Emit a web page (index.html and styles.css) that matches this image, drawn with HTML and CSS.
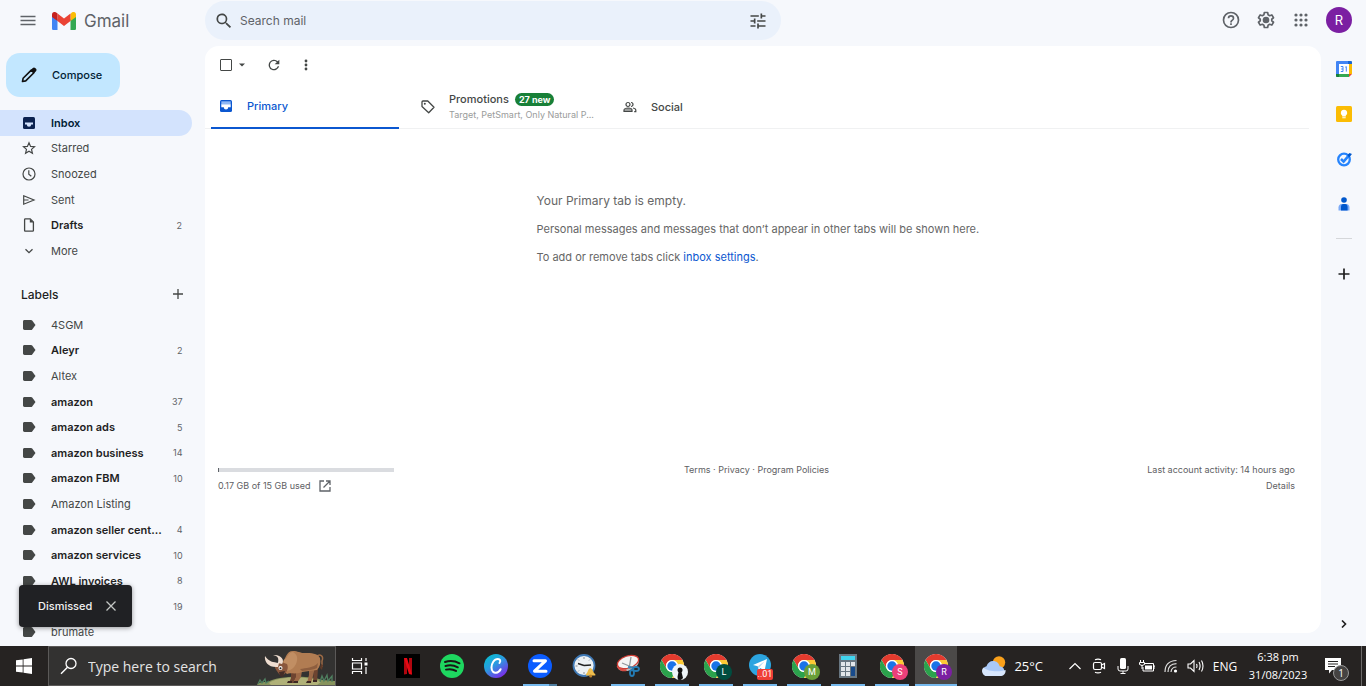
FILE: index.html
```
<!DOCTYPE html>
<html lang="en">
<head>
    <meta charset="UTF-8">
    <meta name="viewport" content="width=device-width, initial-scale=1.0">
    <title>Gmail</title>
    <link rel="stylesheet" href="styles.css">
</head>
<body>
    <!-- Shared icons -->
    <svg class="sprite" aria-hidden="true">
        <symbol id="i-tag" viewBox="0 0 14 14"><path d="M2.500 2h6.500c.5 0 .9.200 1.200.6L13.500 7l-3.300 4.400c-.3.400-.7.600-1.200.6H2.500C1.700 12 1 11.400 1 10.600V3.400C1 2.600 1.700 2 2.500 2z" fill="#444746"/></symbol>
        <symbol id="i-chrome" viewBox="0 0 24 24">
            <circle cx="12" cy="12" r="12" fill="#fff"/>
            <path d="M1.600 6A12 12 0 0 1 22.400 6H12a6 6 0 0 0-5.200 9z" fill="#e33b2e"/>
            <path d="M1.600 6A12 12 0 0 0 12 24l5.200-9A6 6 0 0 1 6.800 15z" fill="#2ba24c"/>
            <path d="M22.400 6A12 12 0 0 1 12 24l5.200-9A6 6 0 0 0 12 6z" fill="#fcc934"/>
            <circle cx="12" cy="12" r="6" fill="#fff"/>
            <circle cx="12" cy="12" r="4.700" fill="#1a73e8"/>
        </symbol>
    </svg>

    <header class="header">
        <div class="brand">
            <button class="icon-button" aria-label="Main menu">
                <svg width="18" height="18" viewBox="0 0 18 18"><path d="M1.500 4.500h15M1.500 8.500h15M1.500 12.500h15" stroke="#5f6368" stroke-width="1.500"/></svg>
            </button>
            <a href="#" class="logo">
                <svg width="24" height="18" viewBox="0 0 24 18">
                    <path d="M0 3v13.400C0 17.300.7 18 1.600 18h3.900V7z" fill="#4285f4"/>
                    <path d="M24 3v13.400c0 .9-.7 1.600-1.600 1.600h-3.900V7z" fill="#34a853"/>
                    <path d="M18.500 2v7L24 4.900V2.500c0-2.200-2.600-3.300-4.200-2z" fill="#fbbc04"/>
                    <path d="M5.500 9V1.500L12 6.400l6.500-4.900V9L12 13.900z" fill="#ea4335"/>
                    <path d="M0 2.500v2.400L5.500 9V1.600L4.200.5C2.500-.8 0 .4 0 2.500z" fill="#c5221f"/>
                </svg>
                <span>Gmail</span>
            </a>
        </div>
        <form class="search">
            <button type="button" class="icon-button" aria-label="Search">
                <svg width="20" height="20" viewBox="0 0 24 24"><path d="M15.500 14h-.8l-.3-.3A6.500 6.500 0 1 0 13.700 14.400l.3.300v.8l5 5 1.500-1.500zm-6 0a4.500 4.500 0 1 1 0-9 4.500 4.500 0 0 1 0 9z" fill="#444746"/></svg>
            </button>
            <input type="text" placeholder="Search mail" aria-label="Search mail">
            <button type="button" class="icon-button" aria-label="Show search options">
                <svg width="20" height="20" viewBox="0 0 24 24"><path d="M3 17v2h6v-2H3zM3 5v2h10V5H3zm10 16v-2h8v-2h-8v-2h-2v6h2zM7 9v2H3v2h4v2h2V9H7zm14 4v-2H11v2h10zm-6-4h2V7h4V5h-4V3h-2v6z" fill="#444746"/></svg>
            </button>
        </form>
        <div class="header-actions">
            <button class="icon-button" aria-label="Support">
                <svg width="20" height="20" viewBox="0 0 24 24"><path d="M11 18h2v-2h-2v2zm1-16a10 10 0 1 0 0 20 10 10 0 0 0 0-20zm0 18a8 8 0 1 1 0-16 8 8 0 0 1 0 16zm0-14a4 4 0 0 0-4 4h2a2 2 0 1 1 4 0c0 2-3 1.800-3 5h2c0-2.300 3-2.500 3-5a4 4 0 0 0-4-4z" fill="#5f6368"/></svg>
            </button>
            <button class="icon-button" aria-label="Settings">
                <svg width="20" height="20" viewBox="0 0 24 24"><path d="M10 3h4l.5 2.700 1.900 1.100 2.600-.9 2 3.400-2.100 1.800v1.800l2.100 1.800-2 3.400-2.600-.9-1.900 1.100L14 21h-4l-.5-2.700-1.900-1.100-2.600.9-2-3.400 2.100-1.800v-1.800L3 9.300l2-3.400 2.600.9 1.900-1.100z" fill="none" stroke="#5f6368" stroke-width="2" stroke-linejoin="round"/><circle cx="12" cy="12" r="4" fill="#5f6368"/></svg>
            </button>
            <button class="icon-button" aria-label="Google apps">
                <svg width="14" height="14" viewBox="0 0 14 14" fill="#5f6368"><circle cx="2" cy="2" r="1.600"/><circle cx="7" cy="2" r="1.600"/><circle cx="12" cy="2" r="1.600"/><circle cx="2" cy="7" r="1.600"/><circle cx="7" cy="7" r="1.600"/><circle cx="12" cy="7" r="1.600"/><circle cx="2" cy="12" r="1.600"/><circle cx="7" cy="12" r="1.600"/><circle cx="12" cy="12" r="1.600"/></svg>
            </button>
            <button class="avatar">R</button>
        </div>
    </header>

    <div class="content">
        <aside class="sidebar">
            <button class="compose">
                <svg width="18" height="18" viewBox="0 0 18 18"><path d="M2.500 15.500l.6-3.200 8.200-8.200 2.600 2.600-8.200 8.200z" fill="none" stroke="#111" stroke-width="1.600" stroke-linejoin="round"/><path d="M10.500 4.300l2.300-2.300c.8-.8 1.700-.7 2.400 0l.8.800c.7.700.7 1.600 0 2.400l-2.300 2.300z" fill="#111"/></svg>
                Compose
            </button>
            <nav class="folders">
                <a href="#" class="item active">
                    <svg width="14" height="14" viewBox="0 0 14 14"><rect x="1" y="1" width="12" height="12" rx="1.500" fill="#0b2250"/><path d="M3 6.500h8v2H9.200a2.200 2.200 0 0 1-4.400 0H3z" fill="#d3e3fd"/></svg>
                    <span class="name">Inbox</span>
                </a>
                <a href="#" class="item">
                    <svg width="14" height="14" viewBox="0 0 24 24"><path d="M12 3l2.700 6.300 6.800.6-5.200 4.500 1.600 6.700-5.900-3.600-5.900 3.600 1.600-6.700-5.200-4.500 6.800-.6z" fill="none" stroke="#444746" stroke-width="2"/></svg>
                    <span class="name">Starred</span>
                </a>
                <a href="#" class="item">
                    <svg width="14" height="14" viewBox="0 0 14 14"><circle cx="7" cy="7" r="6" fill="none" stroke="#444746" stroke-width="1.200"/><path d="M6.800 3.300V7.300l2.500 2" fill="none" stroke="#444746" stroke-width="1.200"/></svg>
                    <span class="name">Snoozed</span>
                </a>
                <a href="#" class="item">
                    <svg width="14" height="14" viewBox="0 0 14 14"><path d="M1.700 2.800L12 7 1.700 11.200zM2 7h4.500" fill="none" stroke="#444746" stroke-width="1.200"/></svg>
                    <span class="name">Sent</span>
                </a>
                <a href="#" class="item unread">
                    <svg width="14" height="14" viewBox="0 0 14 14"><path d="M2.600 1.600c0-.5.300-.8.800-.8h4.800l3.200 3.200v8.400c0 .5-.3.800-.8.800H3.400c-.5 0-.8-.3-.8-.8z" fill="none" stroke="#444746" stroke-width="1.300"/><path d="M7.800.8v3.600h3.600z" fill="#444746"/></svg>
                    <span class="name">Drafts</span>
                    <span class="count">2</span>
                </a>
                <a href="#" class="item">
                    <svg width="14" height="14" viewBox="0 0 14 14"><path d="M3.500 5.200L7 8.700l3.500-3.500" fill="none" stroke="#444746" stroke-width="1.300"/></svg>
                    <span class="name">More</span>
                </a>
            </nav>
            <div class="labels-heading">
                <h2>Labels</h2>
                <button class="icon-button" aria-label="Create new label">
                    <svg width="12" height="12" viewBox="0 0 12 12"><path d="M6 1v10M1 6h10" stroke="#444746" stroke-width="1.300"/></svg>
                </button>
            </div>
            <nav class="labels">
                <a href="#" class="item"><svg width="14" height="14"><use href="#i-tag"/></svg><span class="name">4SGM</span></a>
                <a href="#" class="item unread"><svg width="14" height="14"><use href="#i-tag"/></svg><span class="name">Aleyr</span><span class="count">2</span></a>
                <a href="#" class="item"><svg width="14" height="14"><use href="#i-tag"/></svg><span class="name">Altex</span></a>
                <a href="#" class="item unread"><svg width="14" height="14"><use href="#i-tag"/></svg><span class="name">amazon</span><span class="count">37</span></a>
                <a href="#" class="item unread"><svg width="14" height="14"><use href="#i-tag"/></svg><span class="name">amazon ads</span><span class="count">5</span></a>
                <a href="#" class="item unread"><svg width="14" height="14"><use href="#i-tag"/></svg><span class="name">amazon business</span><span class="count">14</span></a>
                <a href="#" class="item unread"><svg width="14" height="14"><use href="#i-tag"/></svg><span class="name">amazon FBM</span><span class="count">10</span></a>
                <a href="#" class="item"><svg width="14" height="14"><use href="#i-tag"/></svg><span class="name">Amazon Listing</span></a>
                <a href="#" class="item unread"><svg width="14" height="14"><use href="#i-tag"/></svg><span class="name">amazon seller cent...</span><span class="count">4</span></a>
                <a href="#" class="item unread"><svg width="14" height="14"><use href="#i-tag"/></svg><span class="name">amazon services</span><span class="count">10</span></a>
                <a href="#" class="item unread"><svg width="14" height="14"><use href="#i-tag"/></svg><span class="name">AWL invoices</span><span class="count">8</span></a>
                <a href="#" class="item unread"><svg width="14" height="14"><use href="#i-tag"/></svg><span class="name"></span><span class="count">19</span></a>
                <a href="#" class="item"><svg width="14" height="14"><use href="#i-tag"/></svg><span class="name">brumate</span></a>
            </nav>
            <div class="toast">
                <span>Dismissed</span>
                <button class="icon-button" aria-label="Close">
                    <svg width="10" height="10" viewBox="0 0 10 10"><path d="M.5.5l9 9M9.500.5l-9 9" stroke="#c4c7c5" stroke-width="1.300"/></svg>
                </button>
            </div>
        </aside>

        <main class="mailbox">
            <div class="toolbar">
                <input type="checkbox" aria-label="Select">
                <button class="icon-button caret" aria-label="Select options">
                    <svg width="6" height="4" viewBox="0 0 6 4"><path d="M0 .5h6L3 3.500z" fill="#444746"/></svg>
                </button>
                <button class="icon-button" aria-label="Refresh">
                    <svg width="16" height="16" viewBox="0 0 24 24"><path d="M17.650 6.350A8 8 0 1 0 19.730 14h-2.080A6 6 0 1 1 12 6c1.660 0 3.140.69 4.220 1.780L13 11h7V4z" fill="#444746"/></svg>
                </button>
                <button class="icon-button" aria-label="More">
                    <svg width="4" height="12" viewBox="0 0 4 12" fill="#444746"><circle cx="2" cy="2" r="1.400"/><circle cx="2" cy="6" r="1.400"/><circle cx="2" cy="10" r="1.400"/></svg>
                </button>
            </div>
            <div class="tabs">
                <a href="#" class="tab selected">
                    <svg width="14" height="14" viewBox="0 0 14 14"><rect x="1" y="1" width="12" height="12" rx="1.500" fill="#0b57d0"/><path d="M2.300 2.300h9.400V6H2.300z" fill="#8fb8f5"/><path d="M2.300 5.500h9.400v2.700H9.200a2.200 2.200 0 0 1-4.400 0H2.300z" fill="#fff"/></svg>
                    <span>Primary</span>
                </a>
                <a href="#" class="tab">
                    <svg width="14" height="14" viewBox="0 0 14 14"><path d="M1 2c0-.6.4-1 1-1h4.800l6.200 6.200L7.700 12.800 1 6.600z" fill="none" stroke="#444746" stroke-width="1.300" stroke-linejoin="round"/><circle cx="3.800" cy="3.800" r="1" fill="#444746"/></svg>
                    <div class="tab-text">
                        <div class="tab-title">Promotions <span class="badge">27 new</span></div>
                        <div class="senders">Target, PetSmart, Only Natural P...</div>
                    </div>
                </a>
                <a href="#" class="tab">
                    <svg width="14" height="14" viewBox="0 0 14 14"><circle cx="5" cy="4.500" r="2" fill="none" stroke="#444746" stroke-width="1.200"/><path d="M1 11.500V10c0-1.300 2.500-2 4-2s4 .7 4 2v1.500z" fill="#9b9d9c" stroke="#444746" stroke-width="1.200"/><path d="M8 2.500a2 2 0 1 1 0 4M10 8c1.600.3 2.800 1 2.800 2.200v1.500h-1.600" fill="none" stroke="#444746" stroke-width="1.200"/></svg>
                    <span>Social</span>
                </a>
            </div>
            <div class="empty">
                <p class="empty-title">Your Primary tab is empty.</p>
                <p>Personal messages and messages that don’t appear in other tabs will be shown here.</p>
                <p>To add or remove tabs click <a href="#">inbox settings</a>.</p>
            </div>
            <footer class="footer">
                <div class="storage">
                    <div class="bar"><div class="bar-fill" style="width: 0.6%"></div></div>
                    <div class="usage">0.17 GB of 15 GB used
                        <a href="#" aria-label="Manage storage"><svg width="12" height="12" viewBox="0 0 12 12"><path d="M5 1H1v10h10V7M7 1h4v4M11 1L4.500 7.500" fill="none" stroke="#5f6368" stroke-width="1.300"/></svg></a>
                    </div>
                </div>
                <div class="policies"><a href="#">Terms</a> · <a href="#">Privacy</a> · <a href="#">Program Policies</a></div>
                <div class="activity">Last account activity: 14 hours ago<br><a href="#">Details</a></div>
            </footer>
        </main>

        <aside class="rail">
            <button class="icon-button" aria-label="Calendar">
                <svg width="16" height="16" viewBox="0 0 16 16"><path d="M1 0h14v3H3v13H1a1 1 0 0 1-1-1V1a1 1 0 0 1 1-1z" fill="#4285f4"/><path d="M12 0h3a1 1 0 0 1 1 1v2h-4z" fill="#1967d2"/><path d="M13 3h3v10h-3z" fill="#fbbc04"/><path d="M3 13h10v3H3z" fill="#34a853"/><path d="M0 13h3v3H1a1 1 0 0 1-1-1z" fill="#188038"/><path d="M13 13h3l-3 3z" fill="#ea4335"/><path d="M3 3h10v10H3z" fill="#fff"/><path d="M4.800 5.500h2.200v5H4.800M5.200 8h1.800M9.300 6.200l1-.6v5" fill="none" stroke="#4285f4"/></svg>
            </button>
            <button class="icon-button" aria-label="Keep">
                <svg width="16" height="16" viewBox="0 0 16 16"><rect width="16" height="16" rx="1.500" fill="#fbbc04"/><path d="M8 3.700a3.100 3.100 0 0 0-1.800 5.700V10.500h3.600V9.400A3.100 3.100 0 0 0 8 3.700zM6.300 11.300h3.400v1H6.300z" fill="#fff"/></svg>
            </button>
            <button class="icon-button" aria-label="Tasks">
                <svg width="16" height="16" viewBox="0 0 16 16"><circle cx="8" cy="8.500" r="5.800" fill="none" stroke="#2684fc" stroke-width="2.300"/><path d="M5 8l2.600 2.600 6-7" fill="none" stroke="#2684fc" stroke-width="2.600"/><path d="M11.500 4l2-2L16 3l-3 3.500z" fill="#0057cc"/></svg>
            </button>
            <button class="icon-button" aria-label="Contacts">
                <svg width="16" height="16" viewBox="0 0 16 16"><circle cx="8" cy="4" r="2.800" fill="#0057cc"/><path d="M2.500 14.500V11.500c0-2.200 1.500-3.500 3-3.500h5c1.600 0 3 1.300 3 3.500v3z" fill="#7baaf7"/><path d="M5 14.500V11c0-2 1-3 2.200-3h2c1.300 0 2.400 1 2.400 3v3.500z" fill="#0057cc"/></svg>
            </button>
            <hr>
            <button class="icon-button" aria-label="Get add-ons">
                <svg width="12" height="12" viewBox="0 0 12 12"><path d="M6 .5v11M.5 6h11" stroke="#1f1f1f" stroke-width="1.700"/></svg>
            </button>
            <button class="icon-button hide-panel" aria-label="Hide side panel">
                <svg width="6" height="8" viewBox="0 0 6 8"><path d="M1 .5L4.500 4 1 7.500" fill="none" stroke="#1f1f1f" stroke-width="1.600"/></svg>
            </button>
        </aside>
    </div>

    <div class="taskbar">
        <button class="start" aria-label="Start">
            <svg width="16" height="16" viewBox="0 0 16 16"><path d="M0 2.300L6.700 1.400v6.200H0zM7.500 1.300L16 0v7.600H7.500zM0 8.400h6.700v6.200L0 13.700zM7.500 8.400H16V16l-8.500-1.300z" fill="#fff"/></svg>
        </button>
        <div class="task-search">
            <svg width="18" height="18" viewBox="0 0 18 18"><circle cx="11" cy="6.500" r="5" fill="none" stroke="#fff" stroke-width="1.300"/><path d="M7.500 10.200L1 16.800" stroke="#fff" stroke-width="1.400"/></svg>
            <input type="text" placeholder="Type here to search" aria-label="Type here to search">
            <svg class="yak" width="78" height="36" viewBox="0 0 78 36">
                <path d="M0 36c1-3 6-3 11-3 8-6 42-7 54-2l13 1v4z" fill="#87935c"/>
                <path d="M12 34c10-7 42-7 52-1l-4 3H14z" fill="#b0b178"/>
                <path d="M1 35l2-4 2 3 3-4 1 4 3-2M63 33l2-6 2 5 3-6 1 6 4-5v6" fill="none" stroke="#4f8060" stroke-width="1.300"/>
                <path d="M59 8c4-4 8-1 6 4v6" fill="none" stroke="#9c6a45" stroke-width="1.500"/>
                <path d="M64 15l2 1-1 5-2-2z" fill="#5f3b28"/>
                <path d="M34 20l5 3v6l-3 5h-4l2-5zM57 19l4 1-1 13h-4z" fill="#6e4430"/>
                <path d="M39 20l6 2-1 6-4 6h-4l3-6zM52 19l6-1-2 9-2 7h-4l2-8z" fill="#9c6846"/>
                <path d="M30 34h5v-2h-4zM36 34h5v-2h-4zM49 34h5v-2h-4zM56 33h4v-2h-4z" fill="#3c2722"/>
                <path d="M26 12c3-2 3-10 10-10 5 0 7 2 11 2 8 0 13 0 16 5 1 5 0 9-3 12-6 1-10 1-15 2-7 3-12 0-15 2-4-3-5-8-4-13z" fill="#b17c52"/>
                <path d="M27 11c4-2 4-8 9-8 5 3 5 7 3 12-3 6-8 8-12 6z" fill="#c18e63"/>
                <path d="M45 22c6-1 11-1 15-3l1-5c-5 5-12 5-18 6z" fill="#8e5e3f"/>
                <path d="M18 15c4-2 8-2 12 0 2 4 0 9-5 12-3-1-5-5-7-8z" fill="#8a573d"/>
                <path d="M22 23l6-1-2 6-3-1z" fill="#432d28"/>
                <path d="M21 18C12 19 7 13 8 7c4 6 8 6 14 7zM21 14c1-5 0-7-5-8 8-1 12 5 9 9z" fill="#efddd0"/>
                <circle cx="23.500" cy="19" r="2" fill="#fff"/><circle cx="23.500" cy="19.300" r="1" fill="#222"/>
            </svg>
        </div>
        <button class="task-view" aria-label="Task View">
            <svg width="18" height="16" viewBox="0 0 18 16"><path d="M1.500 0v2.500h9V0M1.500 16v-2.500h9V16M1.500 5h9v6h-9zM15 0v3M15 9v7" fill="none" stroke="#fff" stroke-width="1.200"/><path d="M13.500 4.500h3v3h-3z" fill="#fff"/></svg>
        </button>
        <div class="apps">
            <button class="app" aria-label="Netflix"><svg width="24" height="24" viewBox="0 0 24 24"><path d="M0 0h24v24H0z" fill="#000"/><path d="M8 4h3v16l-3 .5zM13 4h3v16.500l-3-.5z" fill="#b1060f"/><path d="M8 4h3l5 16.500-3-.5z" fill="#e50914"/></svg></button>
            <button class="app" aria-label="Spotify"><svg width="24" height="24" viewBox="0 0 24 24"><circle cx="12" cy="12" r="12" fill="#1ed760"/><path d="M5 8c5-1.500 10-1 14.500 1.300M5.500 12c4.500-1.200 8.500-.7 12.300 1.300M6 15.600c3.600-.9 7-.5 10 1.300" fill="none" stroke="#191414" stroke-width="2" stroke-linecap="round"/></svg></button>
            <button class="app" aria-label="Canva"><svg width="24" height="24" viewBox="0 0 24 24"><defs><linearGradient id="canva" x2=".7" y2="1"><stop stop-color="#00c4cc"/><stop offset=".5" stop-color="#2a9be0"/><stop offset="1" stop-color="#7d2ae8"/></linearGradient></defs><circle cx="12" cy="12" r="12" fill="url(#canva)"/><path d="M15.500 9c1.500-2 .6-4-1.600-4C10 5 7.500 9.500 7.500 13.500S10 19 12 18.700c2-.2 3.700-1.700 4.600-3.500" fill="none" stroke="#fff" stroke-width="2" stroke-linecap="round"/></svg></button>
            <button class="app open stacked" aria-label="Zoom"><svg width="24" height="24" viewBox="0 0 24 24"><circle cx="12" cy="12" r="12" fill="#0b5cff"/><path d="M6 6.800h11.500L6.500 17.200H18" fill="none" stroke="#fff" stroke-width="3" stroke-linejoin="round" stroke-linecap="round"/></svg></button>
            <button class="app" aria-label="Alarms"><svg width="24" height="24" viewBox="0 0 24 24"><circle cx="12" cy="11.500" r="10.500" fill="#eef2f5" stroke="#3f78b4" stroke-width="1.800"/><path d="M12 11.500L6 9.500M12 11.500l7-.5" stroke="#222" stroke-width="1.400"/><path d="M12 3v2M12 18v2M3.500 12h2M6 5.500l1 1M6 17.500l1-1M18 5.500l-1 1" stroke="#8b8f94"/><path d="M14 20c2-1 1.600-5 4.300-6 3 .8 2.500 5 5 6v1.500H14z" fill="#eebd4c"/><circle cx="18.700" cy="22" r="1.500" fill="#bd832c"/></svg></button>
            <button class="app open" aria-label="Snipping Tool"><svg width="24" height="24" viewBox="0 0 24 24"><ellipse cx="12" cy="10" rx="11" ry="6.500" transform="rotate(-18 12 10)" fill="#b9bcc0"/><ellipse cx="12" cy="8" rx="11" ry="6" transform="rotate(-18 12 8)" fill="#f4f4f4" stroke="#cf3b33" stroke-width="1.200"/><path d="M1.500 12c1 3 5 5 9 4" fill="none" stroke="#d74b43" stroke-width="2"/><path d="M6 9l12 5M15 3l-2 12" stroke="#92979c" stroke-width="1.300"/><path d="M12 13l6 1" stroke="#3883b8" stroke-width="2"/><ellipse cx="20" cy="15" rx="3" ry="2" fill="none" stroke="#247bb4" stroke-width="1.800"/><ellipse cx="16" cy="19" rx="2" ry="3" fill="none" stroke="#247bb4" stroke-width="1.800"/></svg></button>
            <button class="app open" aria-label="Chrome"><svg width="24" height="24"><use href="#i-chrome"/></svg><span class="profile photo"><svg width="16" height="16" viewBox="0 0 16 16"><circle cx="8" cy="6" r="2.500" fill="#111"/><path d="M6.500 8h3l1.500 6-2 2H6l-.5-3z" fill="#111"/></svg></span></button>
            <button class="app open" aria-label="Chrome, L"><svg width="24" height="24"><use href="#i-chrome"/></svg><span class="profile green">L</span></button>
            <button class="app open" aria-label="Telegram"><svg width="24" height="24" viewBox="0 0 24 24"><circle cx="12" cy="11" r="11" fill="#2ca5e0"/><path d="M5 11L19 5l-2.500 12-4-3-2 2-.7-3.700z" fill="#fff"/><path d="M9.800 12.300L16.500 7.500l-5.200 6-.8 2.500z" fill="#b9dcef"/></svg><span class="unread-badge">..01</span></button>
            <button class="app open" aria-label="Chrome, M"><svg width="24" height="24"><use href="#i-chrome"/></svg><span class="profile olive">M</span></button>
            <button class="app open" aria-label="Calculator"><svg width="18" height="24" viewBox="0 0 18 24"><path d="M0 0h18v24H0z" fill="#687681"/><path d="M2 2h14v4H2z" fill="#40d4ee"/><path d="M2 8h4v4H2zM7 8h4v4H7zM12 8h4v4h-4zM2 13h4v4H2zM7 13h4v4H7zM2 18h4v4H2zM7 18h4v4H7z" fill="#e2e6ea"/><path d="M12 13h4v9h-4z" fill="#174a8b"/></svg></button>
            <button class="app open" aria-label="Chrome, S"><svg width="24" height="24"><use href="#i-chrome"/></svg><span class="profile pink">S</span></button>
            <button class="app open current" aria-label="Chrome, R"><svg width="24" height="24"><use href="#i-chrome"/></svg><span class="profile purple">R</span></button>
        </div>
        <div class="tray">
            <button class="weather">
                <svg width="24" height="20" viewBox="0 0 24 20"><circle cx="17" cy="6.500" r="6.200" fill="#f9a01b"/><path d="M5 20a5 5 0 0 1-.5-9.800C5.500 7 8 5 11 5c3.500 0 6 2.200 6.700 5.300A5 5 0 0 1 19 20z" fill="#a9c8f7"/><path d="M5 20a5 5 0 0 1-3.500-8.500c4 4 15 5 22 2.500A5 5 0 0 1 19 20z" fill="#d7e6fc"/></svg>
                25°C
            </button>
            <button class="tray-icon" aria-label="Show hidden icons"><svg width="12" height="8" viewBox="0 0 12 8"><path d="M.5 7L6 1.500 11.500 7" fill="none" stroke="#fff" stroke-width="1.200"/></svg></button>
            <button class="tray-icon" aria-label="Meet Now"><svg width="14" height="16" viewBox="0 0 14 16"><rect x="1.500" y="4.500" width="8" height="7" rx="1.500" fill="none" stroke="#fff" stroke-width="1.200"/><path d="M9.500 7l3-1.500v5l-3-1.500M3 1.800q3-1.500 6 0M3 14.200q3 1.500 6 0" fill="none" stroke="#fff" stroke-width="1.200"/></svg></button>
            <button class="tray-icon" aria-label="Microphone"><svg width="12" height="16" viewBox="0 0 12 16"><rect x="3" y="0" width="6" height="11" rx="1.500" fill="#fff"/><path d="M1 8v3q0 2 2 2h6q2 0 2-2V8M6 13v2.500M3.500 15.500h5" fill="none" stroke="#fff"/></svg></button>
            <button class="tray-icon" aria-label="Battery"><svg width="16" height="12" viewBox="0 0 16 12"><path d="M5 3.500h9.500v7.500H4V7M14.500 6H16v3" fill="none" stroke="#fff"/><path d="M6 5.500h7v4H6z" fill="#fff"/><path d="M1.500 0v2.500M4.500 0v2.500M.5 2.500h5v2q-2.500 2-5 0zM3 5v4" fill="none" stroke="#fff"/></svg></button>
            <button class="tray-icon" aria-label="Network"><svg width="14" height="14" viewBox="0 0 14 14"><path d="M1 13Q1 2 12.500 1.500M4 13Q4 5 12.500 4.700M7 13Q7.500 8 12.500 8" fill="none" stroke="#ddd" stroke-width="1.200"/><circle cx="11.500" cy="12" r="1.600" fill="#fff"/></svg></button>
            <button class="tray-icon" aria-label="Volume"><svg width="17" height="14" viewBox="0 0 17 14"><path d="M1 5h2.500L7 1.500v11L3.500 9H1zM9.500 5q1 2 0 4M12 3q2.200 4 0 8M14.500 1.500q3 5.500 0 11" fill="none" stroke="#fff" stroke-width="1.100"/></svg></button>
            <button class="language">ENG</button>
            <button class="clock">6:38 pm<br>31/08/2023</button>
            <button class="notifications" aria-label="Notifications">
                <svg width="16" height="16" viewBox="0 0 16 16"><path d="M0 0h16v12H7l-3 3.500V12H0z" fill="#fff"/><path d="M3 3.500h10M3 6h10M3 8.500h7" stroke="#262423"/></svg>
                <span class="notification-count">1</span>
            </button>
        </div>
    </div>
</body>
</html>
```
FILE: styles.css
```
* {
    box-sizing: border-box;
}

body {
    font-family: Inter, Roboto, sans-serif;
    font-size: 11px;
    margin: 0;
    height: 100vh;
    display: flex;
    flex-direction: column;
    overflow: hidden;
    background-color: #f6f8fc;
    color: #444746;
}

a {
    color: inherit;
    text-decoration: none;
}

button {
    font: inherit;
    color: inherit;
    background: none;
    border: none;
    padding: 0;
    cursor: pointer;
}

svg {
    flex: none;
    display: block;
}

.sprite {
    display: none;
}

.icon-button {
    display: flex;
    align-items: center;
    justify-content: center;
}

/* Header */
.header {
    display: flex;
    align-items: center;
    height: 40px;
    flex: none;
}

.brand {
    display: flex;
    align-items: center;
    gap: 15px;
    width: 205px;
    padding: 2px 0 0 19px;
}

.logo {
    display: flex;
    align-items: center;
    gap: 8px;
    font-size: 17px;
    color: #5f6368;
}

.search {
    display: flex;
    align-items: center;
    flex: 0 1 576px;
    height: 39px;
    margin-top: 1px;
    padding: 0 13px 0 9px;
    border-radius: 20px;
    background-color: #eaf1fb;
}

.search input {
    flex: 1;
    min-width: 0;
    padding: 0 6px;
    border: none;
    outline: none;
    background: none;
    font: inherit;
    font-size: 12px;
}

.search input::placeholder {
    color: #5f6368;
}

.header-actions {
    display: flex;
    align-items: center;
    margin-left: auto;
    padding-right: 14px;
}

.header-actions .icon-button {
    width: 35px;
    height: 35px;
}

.avatar {
    width: 26px;
    height: 26px;
    margin-left: 8px;
    border-radius: 50%;
    background-color: #7b1fa2;
    color: #fff;
    font-size: 13px;
}

.content {
    display: flex;
    flex: 1;
    min-height: 0;
}

/* Sidebar */
.sidebar {
    position: relative;
    display: flex;
    flex-direction: column;
    flex: none;
    width: 205px;
    padding: 13px 13px 1px 0;
}

.compose {
    display: flex;
    align-items: center;
    align-self: flex-start;
    gap: 14px;
    width: 114px;
    height: 44px;
    flex: none;
    margin: 0 0 13px 6px;
    padding-left: 14px;
    border-radius: 14px;
    background-color: #c2e7ff;
    color: #001d35;
    font-weight: 500;
}

.folders,
.labels {
    display: grid;
    grid-auto-rows: 1fr;
}

.folders {
    height: 154px;
    flex: none;
}

.labels {
    flex: 1;
    min-height: 0;
}

.item {
    display: flex;
    align-items: center;
    gap: 15px;
    min-height: 0;
    padding: 0 10px 0 22px;
    border-radius: 0 13px 13px 0;
}

.item .name {
    flex: 1;
    white-space: nowrap;
}

.item .count {
    color: #5f6368;
    font-size: 9px;
}

.item.active {
    background-color: #d3e3fd;
    color: #001d35;
    font-weight: 600;
}

.item.unread .name {
    color: #1f1f1f;
    font-weight: 600;
}

.labels-heading {
    display: flex;
    align-items: center;
    justify-content: space-between;
    flex: none;
    height: 48px;
    padding: 12px 8px 0 21px;
}

.labels-heading h2 {
    margin: 0;
    font-size: 12px;
    font-weight: 500;
    color: #1f1f1f;
}

.toast {
    position: absolute;
    left: 19px;
    bottom: 19px;
    display: flex;
    align-items: center;
    justify-content: space-between;
    width: 113px;
    height: 42px;
    padding: 0 16px 0 19px;
    border-radius: 4px;
    background-color: #202124;
    color: #f2f2f2;
    font-weight: 500;
    box-shadow: 0 1px 5px rgba(0, 0, 0, 0.4);
}

/* Mailbox */
.mailbox {
    flex: 1;
    min-width: 0;
    margin: 6px 0 13px;
    border-radius: 14px;
    background-color: #fff;
}

.toolbar {
    display: flex;
    align-items: center;
    height: 38px;
    padding-left: 15px;
}

.toolbar input {
    appearance: none;
    width: 12px;
    height: 12px;
    margin: 0;
    border: 1px solid #444746;
    border-radius: 1px;
}

.toolbar .icon-button {
    width: 32px;
    height: 32px;
}

.toolbar .caret {
    width: 20px;
    margin-right: 6px;
}

.tabs {
    display: flex;
    gap: 14px;
    height: 45px;
    margin-right: 12px;
    padding-left: 6px;
    border-bottom: 1px solid #f0f1f2;
}

.tab {
    display: flex;
    align-items: center;
    gap: 14px;
    width: 188px;
    height: 45px;
    padding-left: 8px;
    font-weight: 500;
}

.tab.selected {
    color: #0b57d0;
    border-bottom: 2px solid #0b57d0;
    padding-top: 1px;
}

.tab-title {
    display: flex;
    align-items: center;
    gap: 6px;
    line-height: 16px;
}

.badge {
    padding: 0 4px;
    border-radius: 7px;
    background-color: #188038;
    color: #fff;
    font-size: 9px;
    font-weight: 700;
    line-height: 13px;
}

.senders {
    color: #9a9c9b;
    font-size: 9px;
    font-weight: 400;
    line-height: 15px;
}

.empty {
    box-sizing: content-box;
    width: 440px;
    max-width: 100%;
    height: 270px;
    margin: 0 auto;
    padding: 62px 13px 0 0;
    color: #666;
    white-space: nowrap;
}

.empty p {
    margin: 0 0 8px;
    line-height: 20px;
}

.empty .empty-title {
    font-size: 12px;
}

.empty a {
    color: #0b57d0;
}

.footer {
    display: grid;
    grid-template-columns: 1fr auto 1fr;
    padding: 1px 26px 0 13px;
    color: #5e6063;
    font-size: 9px;
    line-height: 16px;
}

.bar {
    width: 176px;
    height: 4px;
    margin: 6px 0;
    background-color: #dadce0;
}

.bar-fill {
    height: 100%;
    background-color: #5f6368;
}

.usage {
    display: flex;
    align-items: center;
    gap: 8px;
}

.activity {
    text-align: right;
}

/* Right-hand app rail */
.rail {
    display: flex;
    flex-direction: column;
    align-items: center;
    flex: none;
    width: 45px;
    padding: 6px 0;
}

.rail .icon-button {
    width: 32px;
    height: 45px;
}

.rail hr {
    width: 16px;
    margin: 12px 0;
    border: none;
    border-top: 1px solid #d5d7da;
}

.rail .hide-panel {
    height: 32px;
    margin-top: auto;
}

/* Windows taskbar */
.taskbar {
    display: flex;
    height: 40px;
    flex: none;
    background-color: #262322;
    color: #fff;
    font-family: "Open Sans", "Noto Sans", sans-serif;
}

.start,
.task-view {
    display: flex;
    align-items: center;
    justify-content: center;
    width: 48px;
}

.task-search {
    display: flex;
    align-items: center;
    width: 288px;
    padding-left: 11px;
    border: 1px solid #5b5958;
    background-color: #333231;
}

.task-search input {
    flex: 1;
    min-width: 0;
    padding: 0 0 0 10px;
    border: none;
    outline: none;
    background: none;
    font: inherit;
    font-size: 14px;
}

.task-search input::placeholder {
    color: #e4e4e4;
}

.yak {
    align-self: flex-end;
}

.apps {
    display: flex;
    gap: 2px;
    padding-left: 3px;
}

.app {
    position: relative;
    display: flex;
    align-items: center;
    justify-content: center;
    width: 42px;
}

.app.open::after {
    content: "";
    position: absolute;
    bottom: 0;
    left: 4px;
    right: 4px;
    height: 2px;
    background-color: #76b9ed;
}

.app.stacked::after {
    border-right: 8px solid #4f7d9f;
}

.app.current {
    background-color: #4b4948;
}

.app.current::after {
    left: 0;
    right: 0;
}

.profile {
    position: absolute;
    left: 21px;
    top: 18px;
    width: 16px;
    height: 16px;
    border-radius: 50%;
    overflow: hidden;
    color: #fff;
    font-family: Roboto, sans-serif;
    font-size: 9px;
    line-height: 16px;
    text-align: center;
}

.photo {
    background-color: #eef5f8;
}

.green {
    background-color: #004d40;
}

.olive {
    background-color: #689f38;
}

.pink {
    background-color: #ec407a;
}

.purple {
    background-color: #7b1fa2;
}

.unread-badge {
    position: absolute;
    left: 18px;
    top: 23px;
    width: 16px;
    border-radius: 2px;
    background-color: #ef3e36;
    font-family: Roboto, sans-serif;
    font-size: 9px;
    line-height: 11px;
}

.tray {
    display: flex;
    align-items: center;
    margin-left: auto;
    margin-right: 4px;
    padding-right: 8px;
    border-right: 1px solid #6c6a69;
}

.weather {
    display: flex;
    align-items: center;
    gap: 8px;
    margin-right: 20px;
    font-size: 13px;
}

.tray-icon {
    display: flex;
    align-items: center;
    justify-content: center;
    width: 24px;
    height: 40px;
}

.language {
    width: 36px;
    font-size: 12px;
}

.clock {
    width: 70px;
    line-height: 18px;
}

.notifications {
    position: relative;
    display: flex;
    align-items: center;
    justify-content: center;
    width: 40px;
    height: 40px;
}

.notification-count {
    position: absolute;
    left: 20px;
    top: 19px;
    width: 16px;
    height: 16px;
    border: 1px solid #999;
    border-radius: 50%;
    background-color: #454342;
    font-size: 10px;
    line-height: 14px;
}
```
